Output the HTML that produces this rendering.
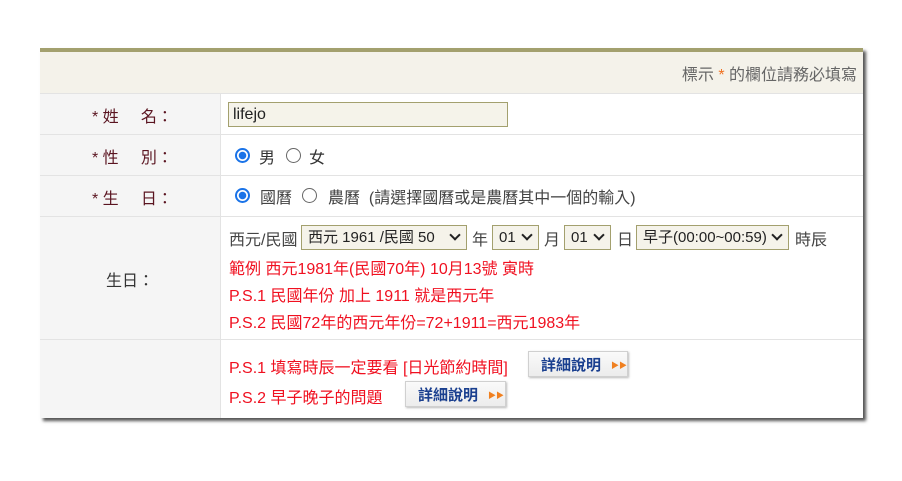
<!DOCTYPE html>
<html><head><meta charset="utf-8"><style>
*{box-sizing:border-box;margin:0;padding:0}
body{width:902px;height:481px;background:#fff;font-family:"Liberation Sans","Noto Sans CJK TC",sans-serif;font-size:16px;color:#333;position:relative;overflow:hidden}
.card{position:absolute;left:40px;top:48px;width:823px;height:370px;background:#fff;border-top:4px solid #a3a06e;box-shadow:3px 3px 3px #555}
.hdr{position:absolute;left:0;top:0;width:823px;height:42px;background:#f4f2ea;border-bottom:1px solid #e3e3e3}
.hdr span{position:absolute;right:6px;top:9px;color:#666}
.row{position:absolute;left:0;width:823px;border-bottom:1px solid #e3e3e3}
.lab{position:absolute;left:0;top:0;bottom:0;width:181px;background:#f5f5f5;border-right:1px solid #e3e3e3}
.lab span{position:absolute;color:#5a1420}
.st{color:#f07020}
.a{position:absolute;white-space:nowrap}
.red{color:#f01020}
.sel{position:absolute;height:25px;border:1px solid #a3a06e;background:#f5f3ea;padding:0 6px;line-height:23px;font-size:15px;color:#222}
.sel i{position:absolute;right:7px;top:5px;width:8px;height:8px;border-right:2px solid #222;border-bottom:2px solid #222;transform:rotate(45deg)}
.radio{position:absolute;width:15px;height:15px;border-radius:50%;border:1px solid #666}
.radio.on{border:2px solid #1a73e8;background:radial-gradient(#1a73e8 3.5px,#fff 4px)}
.btn{position:absolute;height:26px;border:1px solid #d0d0d0;background:linear-gradient(#fafafa,#ececec);box-shadow:1px 1px 2px #bbb;color:#1a3f8f;font-weight:bold;font-size:15px;padding:2px 0 0 12px}
.btn b{color:#f08020;font-size:8px;margin-left:10px;vertical-align:2px}
</style></head><body>
<div class="card">
 <div class="hdr"><span>標示 <span style="position:static;color:#f07020">*</span> 的欄位請務必填寫</span></div>
 <div class="row" style="top:42px;height:41px"><div class="lab"><span style="left:52px;top:9px"><span class="st" style="position:static">*</span> 姓&nbsp;&nbsp;&nbsp;&nbsp; 名：</span></div>
  <div class="a" style="left:188px;top:8px;width:280px;height:25px;border:1px solid #a3a06e;background:#f5f3ea;padding:3px 4px 0;color:#222">lifejo</div></div>
 <div class="row" style="top:83px;height:41px"><div class="lab"><span style="left:52px;top:9px"><span class="st" style="position:static">*</span> 性&nbsp;&nbsp;&nbsp;&nbsp; 別：</span></div>
  <span class="radio on" style="left:195px;top:13px"></span><span class="a" style="left:219px;top:9px">男</span><span class="radio" style="left:246px;top:13px"></span><span class="a" style="left:269px;top:9px">女</span></div>
 <div class="row" style="top:124px;height:41px"><div class="lab"><span style="left:52px;top:9px"><span class="st" style="position:static">*</span> 生&nbsp;&nbsp;&nbsp;&nbsp; 日：</span></div>
  <span class="radio on" style="left:195px;top:12px"></span><span class="a" style="left:220px;top:8px;color:#444">國曆</span><span class="radio" style="left:262px;top:12px"></span><span class="a" style="left:288px;top:8px;color:#444">農曆 &nbsp;(請選擇國曆或是農曆其中一個的輸入)</span></div>
 <div class="row" style="top:165px;height:123px"><div class="lab"><span style="left:66px;top:50px;color:#333">生日：</span></div>
  <span class="a" style="left:189px;top:9px;color:#444">西元/民國</span>
  <span class="sel" style="left:261px;top:8px;width:166px">西元 1961 /民國 50<i></i></span>
  <span class="a" style="left:432px;top:9px;color:#444">年</span>
  <span class="sel" style="left:452px;top:8px;width:47px">01<i></i></span>
  <span class="a" style="left:504px;top:9px;color:#444">月</span>
  <span class="sel" style="left:524px;top:8px;width:47px">01<i></i></span>
  <span class="a" style="left:577px;top:9px;color:#444">日</span>
  <span class="sel" style="left:596px;top:8px;width:153px">早子(00:00~00:59)<i></i></span>
  <span class="a" style="left:755px;top:9px;color:#444">時辰</span>
  <div class="a red" style="left:189px;top:38px">範例 西元1981年(民國70年) 10月13號 寅時</div>
  <div class="a red" style="left:189px;top:65px">P.S.1 民國年份 加上 1911 就是西元年</div>
  <div class="a red" style="left:189px;top:92px">P.S.2 民國72年的西元年份=72+1911=西元1983年</div></div>
 <div class="row" style="top:288px;height:78px;border-bottom:none"><div class="lab"></div>
  <div class="a red" style="left:189px;top:14px">P.S.1 填寫時辰一定要看 [日光節約時間]</div>
  <div class="btn" style="left:488px;top:11px;width:100px">詳細說明<b>▶▶</b></div>
  <div class="a red" style="left:189px;top:44px">P.S.2 早子晚子的問題</div>
  <div class="btn" style="left:365px;top:41px;width:101px">詳細說明<b>▶▶</b></div></div>
</div>
</body></html>
